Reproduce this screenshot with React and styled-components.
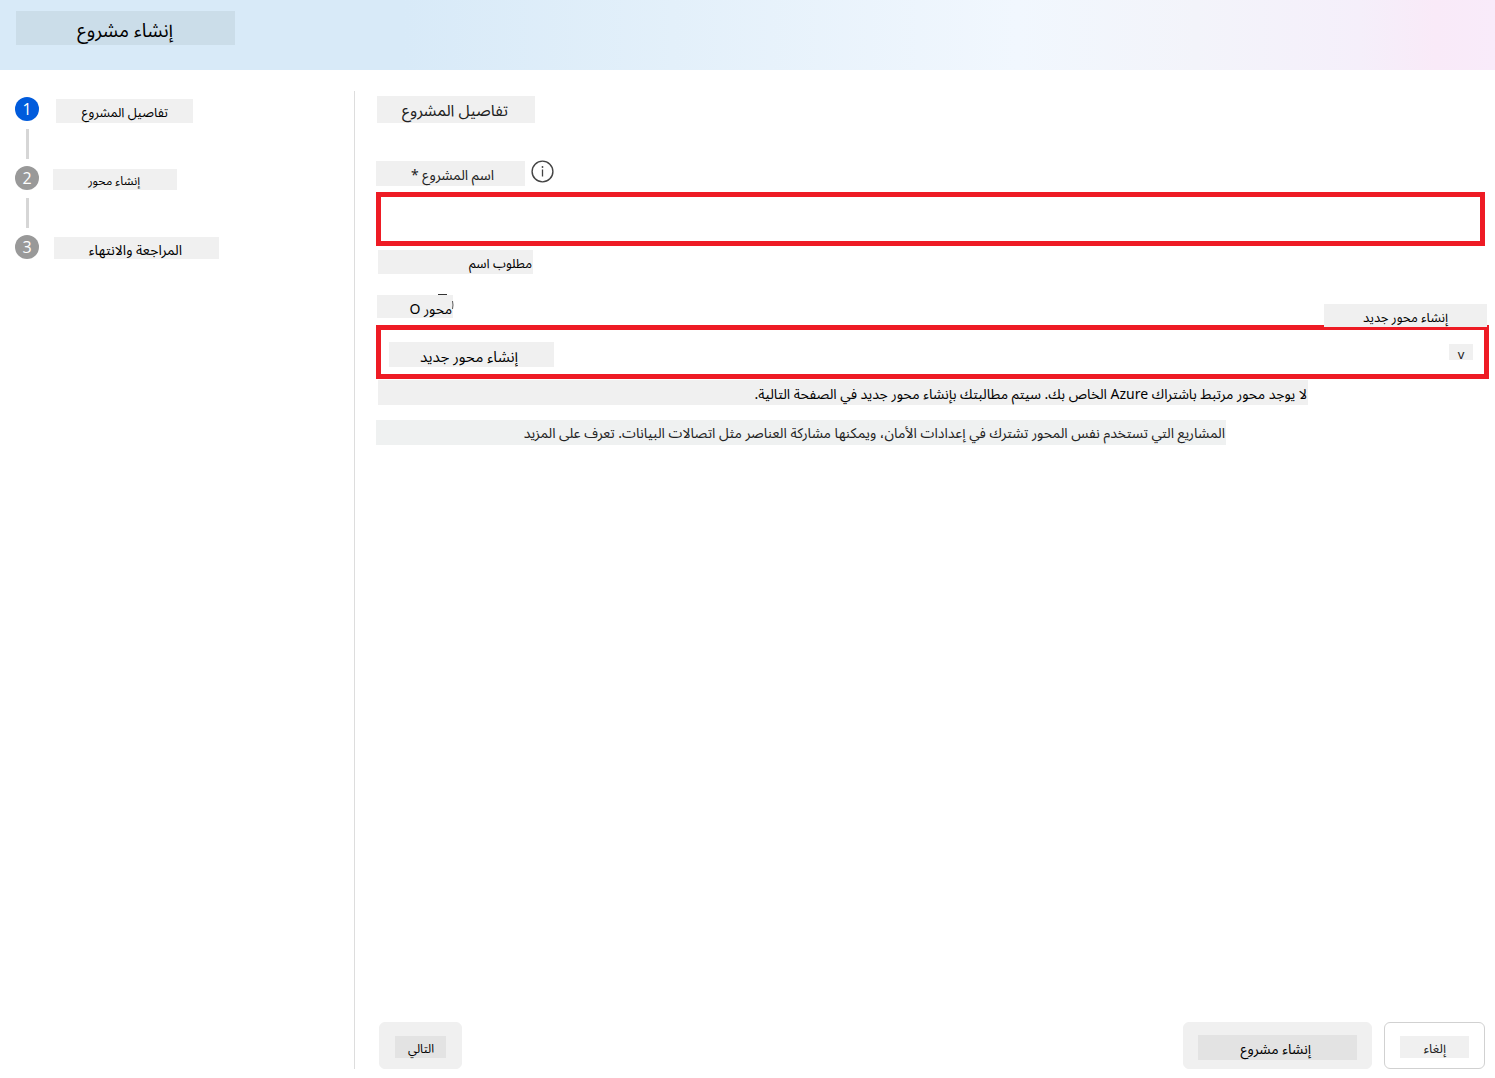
import React from "react";
import styled, { createGlobalStyle } from "styled-components";

const GlobalStyle = createGlobalStyle`
  * { box-sizing: border-box; }
  body {
    margin: 0;
    background: #ffffff;
    color: #000000;
    font-family: "Noto Sans", "Noto Sans Arabic", "Noto Sans UI Arabic", "DejaVu Sans", sans-serif;
  }
`;

const Page = styled.div`
  display: flex;
  flex-direction: column;
  min-height: 100vh;
`;

const Header = styled.header`
  height: 70px;
  padding: 11px 16px;
  background: linear-gradient(90deg, #d8eaf8 0%, #d8eaf8 27%, #e3f0fa 45%, #f1f7fe 68%, #f3f4fa 80%, #f5effa 91%, #f9eaf8 96%, #f9ebfa 100%);
`;

const Tag = styled.span`
  display: block;
  flex: none;
  width: ${(p) => p.$w}px;
  height: ${(p) => p.$h || 24}px;
  padding-right: ${(p) => p.$end || 0}px;
  background: ${(p) => p.$bg || "#f0f0f0"};
  color: ${(p) => p.$color || "#000000"};
  font-size: ${(p) => p.$size || 13}px;
  font-weight: 400;
  line-height: ${(p) => p.$line || 26}px;
  white-space: nowrap;
  direction: rtl;
  text-align: right;
`;

const Body = styled.div`
  display: flex;
  flex: 1;
  padding: 21px 0 9px;
`;

const Sidebar = styled.nav`
  width: 355px;
  flex: none;
  border-right: 1px solid #dddddd;
`;

const Steps = styled.ol`
  margin: 0;
  padding: 6px 0 0 15px;
  list-style: none;
`;

const Step = styled.li`
  display: flex;
  height: 69px;
  gap: ${(p) => p.$gap}px;
`;

const StepLabel = styled.div`
  padding-top: ${(p) => p.$top}px;
`;

const Marker = styled.div`
  display: flex;
  flex-direction: column;
  align-items: center;
  gap: 8px;
  width: 24px;
`;

const Circle = styled.span`
  width: 24px;
  height: 24px;
  border-radius: 50%;
  background: ${(p) => (p.$active ? "#005bdc" : "#999999")};
  color: #ffffff;
  font-family: "Open Sans", "Noto Sans", sans-serif;
  font-size: 16px;
  line-height: 25px;
  text-align: center;
`;

const Line = styled.span`
  width: 3px;
  height: 30px;
  background: #d6d6d6;
`;

const Main = styled.main`
  display: flex;
  flex: 1;
  flex-direction: column;
  min-width: 0;
  padding: 5px 6px 0 21px;
`;

const Heading = styled.h2`
  margin: 0 0 37px;
  padding-left: 1px;
`;

const Title = styled.h1`
  margin: 0;
`;

const LabelRow = styled.div`
  display: flex;
  align-items: flex-start;
  gap: 6px;
  height: 32px;
`;

const FieldLabel = styled.label`
  display: block;
  padding-top: 1px;
`;

const InfoButton = styled.button`
  width: 23px;
  height: 23px;
  padding: 0;
  border: 0;
  background: none;
`;

const TextInput = styled.input`
  display: block;
  width: calc(100% - 4px);
  height: 54px;
  padding: 0 12px;
  border: 5px solid #ee1b24;
  background: #ffffff;
  font: inherit;
  direction: rtl;
  outline: none;
`;

const Note = styled.div`
  padding: ${(p) => p.$top}px 0 0 ${(p) => p.$left || 0}px;
`;

const HubHeader = styled.div`
  display: flex;
  align-items: flex-start;
  justify-content: space-between;
  height: 31px;
  margin-top: 20px;
  padding: 0 2px 0 1px;
`;

const HubLabel = styled.label`
  position: relative;
  display: block;
  padding-top: 1px;
`;

const HiddenInfo = styled.svg`
  position: absolute;
  top: 0;
  right: -1px;
`;

const CreateLink = styled.a`
  position: relative;
  margin-top: 10px;
  text-decoration: none;
`;

const SelectBox = styled.div`
  display: flex;
  align-items: flex-start;
  justify-content: space-between;
  height: 54px;
  padding: 12px 11px 0 8px;
  border: 5px solid #ee1b24;
`;

const HubSelect = styled.select`
  appearance: none;
  width: 165px;
  height: 25px;
  padding: 2px 36px 0 0;
  border: 0;
  border-radius: 0;
  background: #f0f0f0;
  color: #000000;
  font-family: inherit;
  font-size: 15px;
  line-height: 25px;
  direction: rtl;
  outline: none;
`;

const Chevron = styled.span`
  width: 24px;
  height: 16px;
  margin-top: 2px;
  background: #f0f0f0;
  color: #222222;
  font-size: 13px;
  line-height: 20px;
  text-align: center;
`;

const TextLink = styled.a`
  color: inherit;
  text-decoration: none;
`;

const Footer = styled.footer`
  display: flex;
  gap: 12px;
  margin-top: auto;
  padding: 0 4px 0 3px;
`;

const Button = styled.button`
  display: flex;
  justify-content: center;
  height: 47px;
  margin-right: ${(p) => (p.$push ? "auto" : "0")};
  padding: ${(p) => p.$top || 13}px ${(p) => p.$x}px 0;
  border: 1px solid ${(p) => (p.$outline ? "#d1d1d1" : "#f0f0f0")};
  border-radius: 6px;
  background: ${(p) => (p.$outline ? "#ffffff" : "#f0f0f0")};
  font-family: inherit;
`;

const steps = [
  { text: "تفاصيل المشروع", gap: 17, top: 2, w: 137, h: 24, end: 25, size: 13, line: 27 },
  { text: "إنشاء محور", gap: 14, top: 3, w: 124, h: 21, end: 37, size: 12, line: 24 },
  { text: "المراجعة والانتهاء", gap: 15, top: 2, w: 165, h: 22, end: 37, size: 14, line: 26 },
];

export default function App() {
  return (
    <Page>
      <GlobalStyle />
      <Header>
        <Title>
          <Tag $w={219} $h={34} $end={62} $size={19} $line={38} $bg="#cbdde9">إنشاء مشروع</Tag>
        </Title>
      </Header>
      <Body>
        <Sidebar>
          <Steps>
            {steps.map((s, i) => (
              <Step key={s.text} $gap={s.gap}>
                <Marker>
                  <Circle $active={i === 0}>{i + 1}</Circle>
                  {i < steps.length - 1 && <Line />}
                </Marker>
                <StepLabel $top={s.top}>
                  <Tag $w={s.w} $h={s.h} $end={s.end} $size={s.size} $line={s.line}>{s.text}</Tag>
                </StepLabel>
              </Step>
            ))}
          </Steps>
        </Sidebar>
        <Main>
          <Heading>
            <Tag $w={158} $h={27} $end={27} $size={16} $line={29} $color="#222222">تفاصيل المشروع</Tag>
          </Heading>
          <LabelRow>
            <FieldLabel htmlFor="project-name">
              <Tag $w={149} $h={25} $end={31} $size={14} $line={28} $color="#222222">اسم المشروع *</Tag>
            </FieldLabel>
            <InfoButton type="button" aria-label="i">
              <svg width="23" height="23" viewBox="0 0 23 23" fill="none" stroke="#444444">
                <circle cx="11.5" cy="11.5" r="10.4" strokeWidth="1.4" />
                <path d="M11.5 9.5V16.5" strokeWidth="1.3" />
                <circle cx="11.5" cy="7" r="0.9" fill="#444444" stroke="none" />
              </svg>
            </InfoButton>
          </LabelRow>
          <TextInput id="project-name" type="text" />
          <Note $top={4} $left={2}>
            <Tag $w={155} $end={1} $size={13}>مطلوب اسم</Tag>
          </Note>
          <HubHeader>
            <HubLabel htmlFor="hub">
              <Tag $w={76} $h={23} $end={1} $size={14} $line={27}>محور O</Tag>
              <HiddenInfo width="18" height="20" viewBox="0 0 18 20" fill="none" stroke="#333333">
                <path d="M2 .5H11" />
                <path d="M16.5 7Q17.5 11 16.5 15" strokeWidth="0.8" />
              </HiddenInfo>
            </HubLabel>
            <CreateLink href="#hub">
              <Tag $w={163} $h={23} $end={39} $size={13}>إنشاء محور جديد</Tag>
            </CreateLink>
          </HubHeader>
          <SelectBox>
            <HubSelect id="hub">
              <option>إنشاء محور جديد</option>
            </HubSelect>
            <Chevron aria-hidden="true">v</Chevron>
          </SelectBox>
          <Note $top={1} $left={2}>
            <Tag $w={930} $h={25} $end={1} $size={14} $line={27}>
              لا يوجد محور مرتبط باشتراك Azure الخاص بك. سيتم مطالبتك بإنشاء محور جديد في الصفحة التالية.
            </Tag>
          </Note>
          <Note $top={15}>
            <Tag $w={850} $h={25} $end={1} $size={14} $line={26} $bg="#eff1f1" $color="#222222">
              المشاريع التي تستخدم نفس المحور تشترك في إعدادات الأمان، ويمكنها مشاركة العناصر مثل اتصالات البيانات.{" "}
              <TextLink href="#more">تعرف على المزيد</TextLink>
            </Tag>
          </Note>
          <Footer>
            <Button type="button" $x={15} $push>
              <Tag $w={51} $h={22} $end={12} $size={12} $line={25} $bg="#e3e3e3">التالي</Tag>
            </Button>
            <Button type="button" $x={14} $top={12}>
              <Tag $w={159} $h={25} $end={46} $size={14} $line={27} $bg="#e3e3e3">إنشاء مشروع</Tag>
            </Button>
            <Button type="button" $x={15} $outline>
              <Tag $w={69} $h={22} $end={23} $size={13} $line={25} $color="#222222">إلغاء</Tag>
            </Button>
          </Footer>
        </Main>
      </Body>
    </Page>
  );
}
